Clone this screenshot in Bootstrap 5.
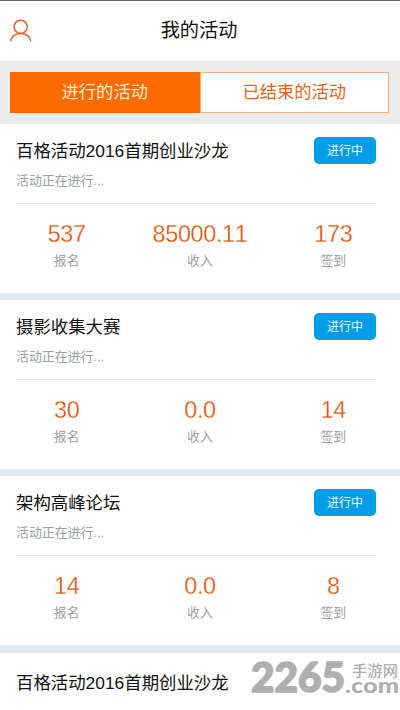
<!DOCTYPE html>
<html lang="zh-CN">
<head>
<meta charset="utf-8">
<meta name="viewport" content="width=device-width, initial-scale=1">
<title>我的活动</title>
<link href="https://cdn.jsdelivr.net/npm/bootstrap@5.3.0/dist/css/bootstrap.min.css" rel="stylesheet">
<style>
body{font-family:"Liberation Sans","Noto Sans CJK SC",sans-serif;height:710px;background:#fff;color:#111}
.topbar{height:61px;border-top:1px solid #666;padding-left:9px}
.topbar svg{width:24px;height:24px}
.page-title{font-size:19.2px;line-height:24px;color:#111}
.side{width:48px}
.side-end{width:59px}
.tabs{background:#ececec;height:63px;padding:11px 11px 11px 10px}
.tab{font-size:17.3px;border-radius:0;border:1px solid #f9b27c;color:#e2661a;background:#fff;line-height:39px;padding:0}
.tab.active{background:#ff6b00!important;border-color:#ff6b00!important;color:#ffe8cd!important}
.event{height:176px;border-bottom:7px solid #e4e9f1}
.event.final{height:177px;border-bottom-width:8px}
.event-head{margin:0 24px 0 16px;height:80px;padding-top:13px;border-bottom:1px solid #e4e6ea}
.event-name{font-size:17.4px;line-height:28px;color:#111}
.state{width:62px;height:27px;line-height:28px;font-size:12px;border-radius:5px;background:#049be8;color:#effaff}
.hint{font-size:12.9px;line-height:20px;margin-top:6px;color:#9b9fa3}
.num{font-size:23.4px;line-height:28px;padding-top:16px;color:#dd4f05;font-kerning:none;letter-spacing:-.35px;-webkit-text-stroke:.3px #fff}
.cap{font-size:12.9px;line-height:20px;margin-top:3px;color:#9b9fa3}
.last-event{padding:16px 24px 0 16px}
.site{right:0;top:656px;width:152px;height:42px}
</style>
<script src="https://cdn.jsdelivr.net/npm/bootstrap@5.3.0/dist/js/bootstrap.bundle.min.js"></script>
</head>
<body class="position-relative overflow-hidden">
<header class="topbar d-flex align-items-center">
  <div class="side"><svg viewBox="0 0 24 24" fill="none" stroke="#df662a" stroke-width="1.5" stroke-linecap="round"><circle cx="11.7" cy="7.8" r="6.6"/><path d="M1.8 21.7C3 16.6 7 14.4 11.7 14.4S20.4 16.6 21.6 21.7"/></svg></div>
  <h1 class="page-title flex-fill text-center m-0 fw-normal">我的活动</h1>
  <div class="side-end"></div>
</header>
<nav class="tabs d-flex">
  <a class="tab btn active w-50">进行的活动</a>
  <a class="tab btn w-50">已结束的活动</a>
</nav>
<main>
  <section class="event">
    <div class="event-head">
      <div class="d-flex justify-content-between"><div class="event-name">百格活动2016首期创业沙龙</div><span class="state text-center">进行中</span></div>
      <div class="hint">活动正在进行...</div>
    </div>
    <div class="row g-0 text-center">
      <div class="col-4"><div class="num">537</div><div class="cap">报名</div></div>
      <div class="col-4"><div class="num">85000.11</div><div class="cap">收入</div></div>
      <div class="col-4"><div class="num">173</div><div class="cap">签到</div></div>
    </div>
  </section>
  <section class="event">
    <div class="event-head">
      <div class="d-flex justify-content-between"><div class="event-name">摄影收集大赛</div><span class="state text-center">进行中</span></div>
      <div class="hint">活动正在进行...</div>
    </div>
    <div class="row g-0 text-center">
      <div class="col-4"><div class="num">30</div><div class="cap">报名</div></div>
      <div class="col-4"><div class="num">0.0</div><div class="cap">收入</div></div>
      <div class="col-4"><div class="num">14</div><div class="cap">签到</div></div>
    </div>
  </section>
  <section class="event final">
    <div class="event-head">
      <div class="d-flex justify-content-between"><div class="event-name">架构高峰论坛</div><span class="state text-center">进行中</span></div>
      <div class="hint">活动正在进行...</div>
    </div>
    <div class="row g-0 text-center">
      <div class="col-4"><div class="num">14</div><div class="cap">报名</div></div>
      <div class="col-4"><div class="num">0.0</div><div class="cap">收入</div></div>
      <div class="col-4"><div class="num">8</div><div class="cap">签到</div></div>
    </div>
  </section>
  <section class="last-event"><div class="event-name">百格活动2016首期创业沙龙</div></section>
</main>
<svg class="site position-absolute" viewBox="0 0 152 42" fill="#afafaf" stroke="#afafaf" stroke-linejoin="round">
  <text x="3" y="35.5" font-family="Lato" font-weight="900" font-size="41" stroke-width="1.6" textLength="94" lengthAdjust="spacingAndGlyphs">2265</text>
  <text x="104" y="20" font-family="Noto Sans CJK SC" font-weight="500" font-size="14.5" stroke-width="0" textLength="46" lengthAdjust="spacingAndGlyphs">手游网</text>
  <text x="97" y="36.5" font-family="Lato" font-weight="900" font-size="21" stroke-width="0" textLength="54" lengthAdjust="spacingAndGlyphs">.com</text>
</svg>
</body>
</html>
